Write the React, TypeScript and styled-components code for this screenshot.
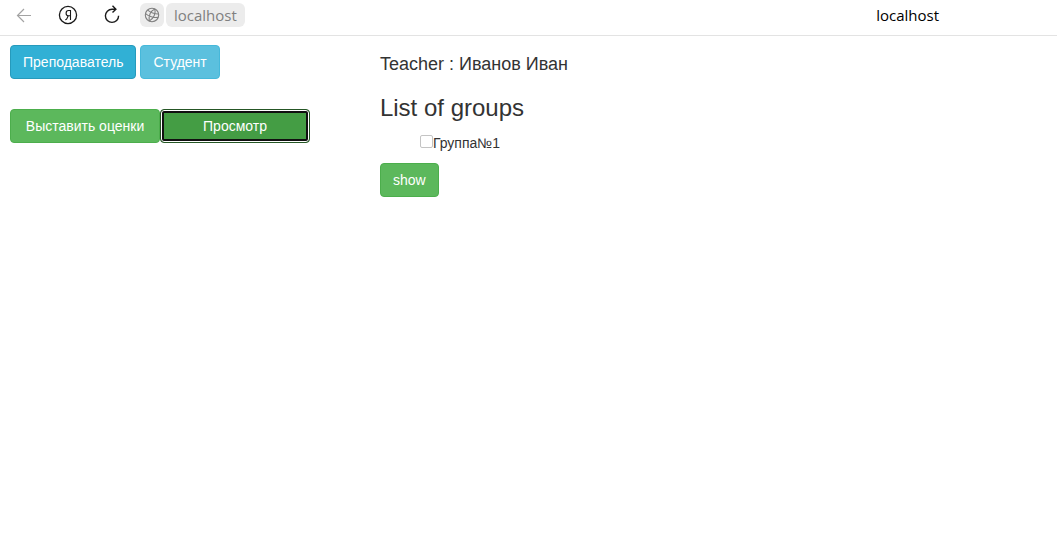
import React, { useState } from "react";
import styled, { createGlobalStyle } from "styled-components";

const GlobalStyle = createGlobalStyle`
  * { box-sizing: border-box; }
  body {
    margin: 0;
    background: #fff;
    color: #333;
    font: 14px/20px "Liberation Sans", Arial, sans-serif;
  }
`;

const BrowserBar = styled.header`
  display: flex;
  align-items: center;
  height: 36px;
  padding: 0 118px 5px 12px;
  border-bottom: 1px solid #e3e3e3;
  font: 15px/24px "Open Sans", sans-serif;
`;

const NavButtons = styled.nav`
  display: flex;
  gap: 20px;
  margin-right: 16px;
`;

const NavButton = styled.button<{ $muted?: boolean }>`
  display: flex;
  padding: 0;
  border: 0;
  background: none;
  color: ${(p) => (p.$muted ? "#a3a3a3" : "#1a1a1a")};
`;

const SiteButton = styled.button`
  display: flex;
  align-items: center;
  justify-content: center;
  width: 24px;
  height: 24px;
  margin-right: 2px;
  padding: 0;
  border: 0;
  border-radius: 6px;
  background: #ececec;
  color: #808080;
`;

const Address = styled.a`
  padding: 0 8px;
  border-radius: 6px;
  background: #ececec;
  color: #808080;
  text-decoration: none;
`;

const PageTitle = styled.span`
  margin-left: auto;
  color: #000;
`;

const Page = styled.div`
  display: grid;
  grid-template-columns: 35% 1fr;
  padding: 9px 10px;
`;

const Sidebar = styled.aside`
  display: flex;
  flex-direction: column;
  gap: 30px;
`;

const ButtonRow = styled.div<{ $gap?: number }>`
  display: flex;
  gap: ${(p) => p.$gap ?? 0}px;
`;

const tones = {
  info: ["#5bc0de", "#46b8da"],
  infoActive: ["#31b0d5", "#269abc"],
  success: ["#5cb85c", "#4cae4c"],
  successFocus: ["#449d44", "#255625"],
};

const Button = styled.button<{ $tone: keyof typeof tones; $wide?: boolean }>`
  height: 34px;
  width: ${(p) => (p.$wide ? "150px" : "auto")};
  padding: 6px 12px;
  border: 1px solid ${(p) => tones[p.$tone][1]};
  border-radius: 4px;
  background: ${(p) => tones[p.$tone][0]};
  color: #fff;
  font: inherit;
  white-space: nowrap;
  cursor: pointer;
  box-shadow: ${(p) =>
    p.$tone === "successFocus" ? "inset 0 0 0 1px #fff, inset 0 0 0 3px #101010" : "none"};
`;

const Main = styled.main`
  padding: 9px 7px;
`;

const TeacherName = styled.h4`
  margin: 0 0 20px;
  font-size: 18px;
  font-weight: 500;
  line-height: 20px;
`;

const ListTitle = styled.h3`
  margin: 0 0 11px;
  font-size: 24px;
  font-weight: 500;
  line-height: 28px;
`;

const GroupList = styled.ul`
  margin: 0 0 10px;
  padding-left: 40px;
  list-style: none;
`;

const GroupLabel = styled.label`
  display: flex;
  align-items: flex-start;
`;

const Checkbox = styled.input`
  appearance: none;
  width: 13px;
  height: 13px;
  margin: 2px 0 0;
  border: 1px solid #c4c4c4;
  border-radius: 2px;
  background: #fff;

  &:checked { background: #337ab7; }
`;

const BackIcon = () => (
  <svg width="24" height="24" viewBox="0 0 24 24" fill="none" stroke="currentColor" strokeWidth="1.2">
    <path d="M19 12.5H5.5M12 6L5.5 12.5L12 19" />
  </svg>
);

const HomeIcon = () => (
  <svg width="24" height="24" viewBox="0 0 24 24" fill="none" stroke="currentColor" strokeWidth="1.3">
    <circle cx="12" cy="12" r="8.6" />
    <path strokeWidth="1.1" d="M14.5 17V7.5H12.6C11 7.5 10.1 8.6 10.1 10.2C10.1 11.8 11 12.8 12.5 12.8H14.5M12.3 12.8L10.7 16C10.4 16.6 10 16.8 9.2 16.8" />
  </svg>
);

const ReloadIcon = () => (
  <svg width="24" height="24" viewBox="0 0 24 24" fill="none" stroke="currentColor" strokeWidth="1.4">
    <path d="M18.6 12.8A6.6 6.6 0 1 1 12 6.2H15.6M12.5 2.8L15.9 6.2L12.5 9.6" />
  </svg>
);

const GlobeIcon = () => (
  <svg width="16" height="16" viewBox="0 0 16 16" fill="none" stroke="currentColor" strokeWidth="1.1">
    <circle cx="8" cy="8" r="6.7" />
    <path d="M10.8 1.9C6.6 3.6 4.4 8.6 5.2 14.1M10.8 1.9C12.2 6.4 9.6 11.4 5.2 14.1M1.6 6.6C5.4 9.8 9.8 11 14 10.4M3.7 3.1C7 5.8 10.6 7.1 14.6 7" />
  </svg>
);

export default function App() {
  const [checked, setChecked] = useState(false);

  return (
    <>
      <GlobalStyle />
      <BrowserBar>
        <NavButtons>
          <NavButton $muted aria-label="Back"><BackIcon /></NavButton>
          <NavButton aria-label="Home"><HomeIcon /></NavButton>
          <NavButton aria-label="Reload"><ReloadIcon /></NavButton>
        </NavButtons>
        <SiteButton aria-label="Site information"><GlobeIcon /></SiteButton>
        <Address href="#">localhost</Address>
        <PageTitle>localhost</PageTitle>
      </BrowserBar>
      <Page>
        <Sidebar>
          <ButtonRow $gap={4}>
            <Button $tone="infoActive">Преподаватель</Button>
            <Button $tone="info">Студент</Button>
          </ButtonRow>
          <ButtonRow>
            <Button $tone="success" $wide>Выставить оценки</Button>
            <Button $tone="successFocus" $wide>Просмотр</Button>
          </ButtonRow>
        </Sidebar>
        <Main>
          <TeacherName>Teacher : Иванов Иван</TeacherName>
          <ListTitle>List of groups</ListTitle>
          <GroupList>
            <li>
              <GroupLabel>
                <Checkbox
                  type="checkbox"
                  checked={checked}
                  onChange={(e) => setChecked(e.target.checked)}
                />
                Группа№1
              </GroupLabel>
            </li>
          </GroupList>
          <Button $tone="success">show</Button>
        </Main>
      </Page>
    </>
  );
}
